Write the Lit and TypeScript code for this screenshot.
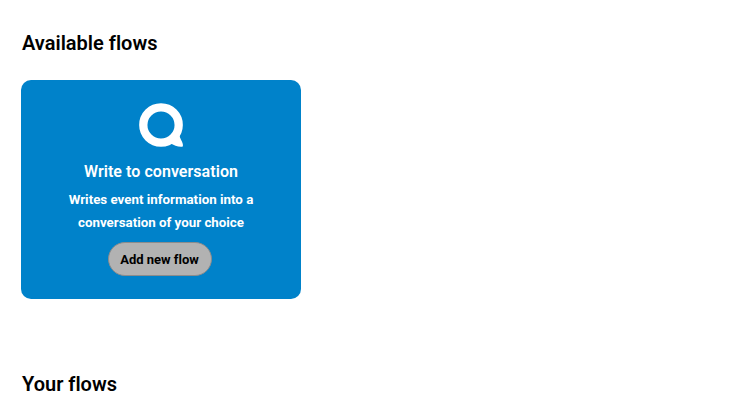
import { LitElement, html, css } from "lit";
import { customElement } from "lit/decorators.js";

@customElement("flow-card")
class FlowCard extends LitElement {
  static styles = css`
    :host { display: block; }
    .card { box-sizing: border-box; width: 280px; height: 219px; padding: 22px 30px 0; border-radius: 10px; background: #0082ca; color: #fff; display: flex; flex-direction: column; align-items: center; text-align: center; }
    .logo { width: 46px; height: 46px; display: block; }
    .title { margin: 13px 0 0; font-size: 16px; letter-spacing: 0.05px; line-height: 22px; font-weight: 600; }
    .text { margin: 5px 0 0; font-size: 13.333px; line-height: 23px; font-weight: 700; width: 200px; }
    .button { box-sizing: border-box; margin: 8px 2px 0 0; width: 104px; height: 34px; padding: 0 1px 0 0; border: 1px solid #8c8c8c; border-radius: 17px; background: #b2b2b2; color: #000; font: 700 13px Roboto, sans-serif; font-variant-ligatures: none; white-space: nowrap; }
  `;
  render() {
    return html`<article class="card">
      <svg class="logo" viewBox="0 0 46 46"><circle cx="23" cy="23" r="17.700" fill="none" stroke="#fff" stroke-width="8.300"/><path d="M32 41L41 32C41.500 36 44.300 39 44.800 42C45.200 44.300 44.800 45 43 44.800C39 44.500 36 43.500 32 41Z" fill="#fff"/></svg>
      <h3 class="title">Write to conversation</h3>
      <p class="text">Writes event information into a conversation of your choice</p>
      <button class="button">Add new flow</button>
    </article>`;
  }
}

@customElement("app-root")
class AppRoot extends LitElement {
  static styles = css`
    :host { display: block; box-sizing: border-box; height: 411px; overflow: hidden; background: #fff; color: #000; font-family: Roboto, sans-serif; font-variant-ligatures: none; padding: 30px 21px 0; }
    .heading { margin: 0 0 0 1px; font-size: 20px; line-height: 26px; font-weight: 600; }
    .card { margin: 24px 0 72px; }
  `;
  render() {
    return html`<h2 class="heading">Available flows</h2>
      <flow-card class="card"></flow-card>
      <h2 class="heading">Your flows</h2>`;
  }
}
